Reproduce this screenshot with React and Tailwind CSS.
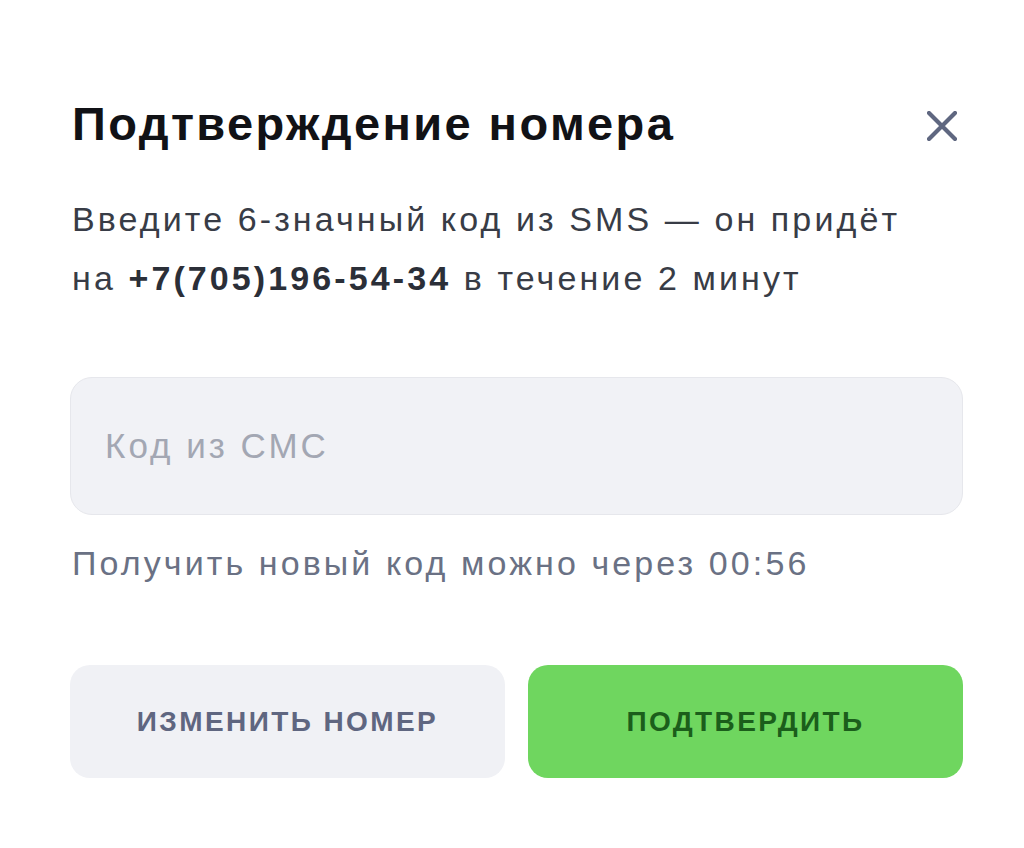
export default function App() {
  return (
    <div className="min-h-[848px] w-[1024px] bg-white font-['Liberation_Sans',Arial,sans-serif]">
      <div className="pl-[70px] pr-[61px] pt-[94px]">
        <div className="flex items-center justify-between">
          <h1 className="pl-[2px] text-[47px] leading-[60px] font-bold tracking-[2.4px] text-[#111216]">
            Подтверждение номера
          </h1>
          <button className="mr-[6px] mt-[4px] text-[#5f6780]">
            <svg width="30" height="30" viewBox="0 0 30 30" fill="none" stroke="currentColor" strokeWidth="4.2" strokeLinecap="round">
              <path d="M2 2L28 28M28 2L2 28" />
            </svg>
          </button>
        </div>

        <p className="mt-[36px] pl-[2px] text-[34px] leading-[59px] tracking-[3.1px] text-[#383c46]">
          Введите 6-значный код из SMS — он придёт
          <br />
          на <span className="font-bold text-[#2b2f38]">+7(705)196-54-34</span> в течение 2 минут
        </p>

        <div className="mt-[69px] h-[138px] rounded-[22px] border border-[#e6e7ec] bg-[#f1f2f6] flex items-center pl-[34px]">
          <span className="text-[35px] tracking-[3px] text-[#a3a7b3]">Код из СМС</span>
        </div>

        <p className="mt-[23px] pl-[2px] text-[34px] leading-[50px] tracking-[3.1px] text-[#6a7184]">
          Получить новый код можно через 00:56
        </p>

        <div className="mt-[77px] grid grid-cols-2 gap-[23px]">
          <button className="h-[113px] rounded-[20px] bg-[#f0f1f5] text-[28px] font-bold tracking-[2.4px] text-[#5f6680]">
            ИЗМЕНИТЬ НОМЕР
          </button>
          <button className="h-[113px] rounded-[20px] bg-[#6fd65f] text-[28px] font-bold tracking-[2.4px] text-[#1b5e1b]">
            ПОДТВЕРДИТЬ
          </button>
        </div>
      </div>
    </div>
  )
}
